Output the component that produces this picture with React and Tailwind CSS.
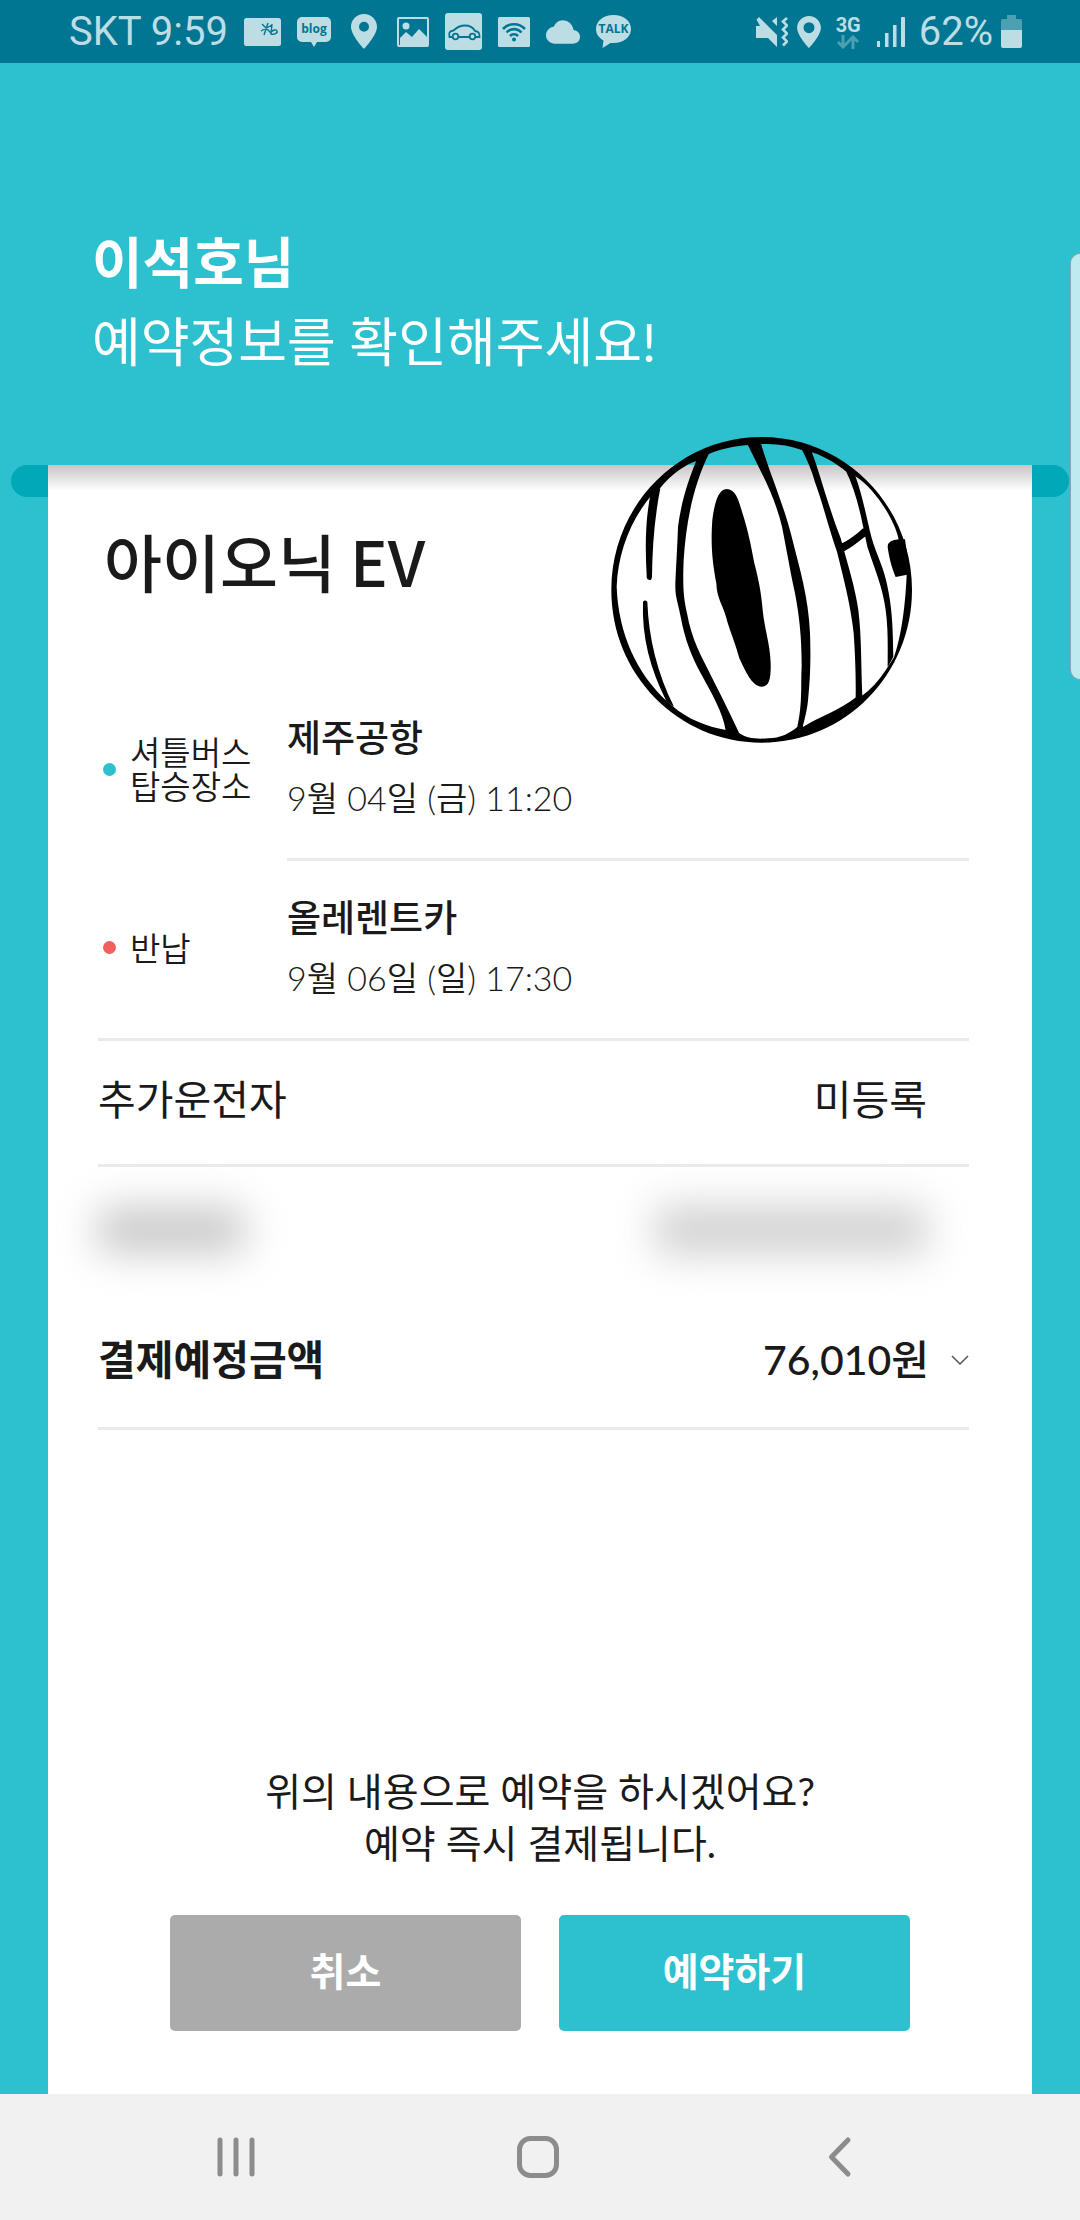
import { IoCloudSharp } from 'react-icons/io5';

const INK = '#bddde5';
const SEA = '#007693';

function PinIcon({ className, hole = 5 }) {
  return (
    <svg viewBox="0 0 26 35" className={className} fill="none">
      <path
        fillRule="evenodd"
        fill={INK}
        d={`M13 0C5.800 0 0 5.700 0 12.800 0 21.500 13 35 13 35s13-13.500 13-22.200C26 5.700 20.200 0 13 0zM13 ${12.8 - hole}a${hole} ${hole} 0 1 1 0 ${hole * 2}a${hole} ${hole} 0 1 1 0-${hole * 2}z`}
      />
    </svg>
  );
}

function CardIcon() {
  return (
    <svg viewBox="0 0 37 28" className="h-7 w-[37px]" fill="none">
      <rect width="37" height="28" rx="2.500" fill={INK} />
      <path d="M18 6l9 9M24 5l-4 12M17 13l11-6M28 6l-1 10c3 1 7-1 6-3-1-2-4-1-6 1" stroke={SEA} strokeWidth="1.400" />
    </svg>
  );
}

function BlogIcon() {
  return (
    <span className="relative flex h-[30px] w-[34px] justify-center">
      <svg viewBox="0 0 34 30" className="absolute inset-0 h-[30px] w-[34px]">
        <path fill={INK} d="M5 0h24a5 5 0 0 1 5 5v15a5 5 0 0 1-5 5h-9l-3 5-3-5H5a5 5 0 0 1-5-5V5a5 5 0 0 1 5-5z" />
      </svg>
      <span className="relative pt-1 font-['Open_Sans'] text-[12px] leading-4 font-bold text-[#007693]">blog</span>
    </span>
  );
}

function TalkIcon() {
  return (
    <span className="relative flex h-[33px] w-[35px] justify-center">
      <svg viewBox="0 0 35 33" className="absolute inset-0 h-[33px] w-[35px]">
        <path fill={INK} d="M17.500 0C7.500 0 0 6 0 14c0 5 3 9 7.500 11.500L6.500 33l8-5h3C27.500 28 35 22 35 14S27.500 0 17.500 0z" />
      </svg>
      <span className="relative pt-1.5 font-['Open_Sans'] text-[12px] leading-4 font-bold text-[#007693]">TALK</span>
    </span>
  );
}

function StatusBar() {
  return (
    <header className="flex h-[63px] items-center bg-[#007693] pr-[58px] pl-[69px] font-[Roboto] text-[40px] leading-none text-[#bddde5]">
      <span>SKT 9:59</span>
      <div className="ml-4 flex items-center gap-4">
        <CardIcon />
        <BlogIcon />
        <PinIcon className="ml-1 h-[35px] w-[26px]" />
        <svg viewBox="0 0 32 30" className="ml-1 h-[30px] w-8" fill="none">
          <rect x="1" y="1" width="30" height="28" stroke={INK} strokeWidth="2" rx="1" />
          <circle cx="9" cy="9" r="3.500" fill={INK} />
          <path fill={INK} d="M3 21l6-6 6 5 7-8 8 8v9H3z" />
        </svg>
        <svg viewBox="0 0 37 37" className="h-[37px] w-[37px]" fill="none" stroke={SEA} strokeWidth="1.800">
          <rect width="37" height="37" rx="3" fill={INK} stroke="none" />
          <path d="M7 24H4.500c-1-4 0-6 4-6.500C12 14 15 12.500 20 12.500s8 2 10 5.500c4 .500 4.500 2 4.500 6H31M14 24h10" />
          <circle cx="10.500" cy="23.500" r="2.800" />
          <circle cx="27.500" cy="23.500" r="2.800" />
        </svg>
        <svg viewBox="0 0 32 30" className="h-[30px] w-8" fill="none" stroke={SEA} strokeWidth="2.600">
          <rect width="32" height="30" rx="1.500" fill={INK} stroke="none" />
          <path d="M5 12a15 15 0 0 1 22 0M8.500 15.500a10 10 0 0 1 15 0M12 19a5.500 5.500 0 0 1 8 0" />
          <circle cx="16" cy="22.500" r="2" fill={SEA} stroke="none" />
        </svg>
        <IoCloudSharp className="h-[34px] w-[34px]" />
        <TalkIcon />
      </div>

      <div className="ml-auto flex items-center">
        <svg viewBox="0 0 32 32" className="h-8 w-8" fill={INK}>
          <path d="M0 10h4L0.500 3.500 3 1l18 18v12l-9-9H0zM21 1v9l-5-5z" />
          <path d="M31 2l-4 3.500 4 4-4 4 4 4-4 4 4 4-4 4" fill="none" stroke={INK} strokeWidth="2.600" />
        </svg>
        <PinIcon className="ml-2 h-8 w-[26px]" hole={6} />
        <div className="ml-3.5 flex flex-col items-center">
          <span className="text-[20px] leading-5 font-bold">3G</span>
          <svg viewBox="0 0 24 14" className="h-3.5 w-6" fill="none" stroke="#4d9fb4" strokeWidth="3">
            <path d="M7 0v12M2 7l5 5 5-5M17 14V2M12 7l5-5 5 5" />
          </svg>
        </div>
        <svg viewBox="0 0 28 30" className="ml-4 h-[30px] w-7" fill={INK}>
          <rect x="0" y="24" width="3" height="6" />
          <rect x="8" y="16" width="3.500" height="14" />
          <rect x="16" y="8" width="3.500" height="22" />
          <rect x="24" y="0" width="4" height="30" rx="1" />
        </svg>
        <span className="ml-3.5">62%</span>
        <svg viewBox="0 0 21 33" className="ml-2 h-[33px] w-[21px]">
          <path fill="#4d9fb4" d="M6 0h9v4h4a2 2 0 0 1 2 2v10H0V6a2 2 0 0 1 2-2h4z" />
          <path fill={INK} d="M0 15h21v16a2 2 0 0 1-2 2H2a2 2 0 0 1-2-2z" />
        </svg>
      </div>
    </header>
  );
}

// hand-drawn striped ball that hangs over the top edge of the ticket
function BallMark() {
  return (
    <svg viewBox="0 0 1020 1020" className="absolute -top-[45px] right-[102px] h-[340px] w-[340px]" fill="#000">
      <path
        fillRule="evenodd"
        d="M515 51C264 51 64 257 64 510s200 458 451 458 451-205 451-458S766 51 515 51z
          M80 500C84 400 120 300 188 222L210 205C240 165 290 130 322 122L355 103C380 90 430 78 475 75L515 72C560 70 600 76 635 90L665 97C710 110 750 140 765 152L795 168C850 200 915 300 925 355L950 465C945 580 930 660 912 712L893 742C865 785 840 810 818 826L798 832C750 870 690 890 640 920L625 918C600 940 570 955 535 955C500 958 470 955 448 940L408 930C350 920 290 895 250 860L232 845C140 760 85 640 80 500z"
      />
      <path d="M183 215l28-10c-18 90-24 180-25 265q-2 14-9 9-8 0-7-13c-5-90-4-170 13-251z" />
      <path d="M159 545q6-7 13 0c4 110 30 215 80 315l-22-15c-50-100-75-195-71-300z" />
      <path d="M320 120l38-22C308 200 288 310 281 420C278 500 280 530 291 580C305 660 335 710 362 765C395 830 420 880 450 945L407 932C400 880 365 820 335 765C305 710 285 660 272 590C262 540 255 530 256 490C258 440 262 380 264 320C275 240 295 180 320 120z" />
      <path d="M410 207C436 207 446 240 456 275C474 330 484 380 493 430C506 480 514 520 518 570C524 630 540 670 542 730C543 775 538 800 515 800C485 800 465 750 448 715C435 665 418 630 408 590C395 550 380 530 379 490C366 420 362 370 367 300C373 250 385 207 410 207z" />
      <path d="M472 72l40-5C535 150 580 250 605 350C630 450 655 530 660 640C663 720 660 780 655 830C652 870 645 890 638 922L622 920C638 850 632 790 635 740C635 650 628 590 615 520C600 450 590 390 576 320C555 230 510 150 472 72z" />
      <path d="M632 82l32 10C690 160 715 260 752 355C772 430 795 500 805 570C815 650 813 740 817 828L797 834C798 760 795 700 791 640C783 560 762 480 741 395C712 310 698 250 676 190C665 150 650 115 632 82z" />
      <path d="M765 148l30 17C815 220 825 270 839 330C852 390 877 430 888 480C905 550 909 610 910 710L893 742C893 680 895 630 887 570C878 500 855 450 832 380C815 300 802 220 765 148z" />
      <path d="M745 374c30-10 55-32 75-50l12 22c-25 15-45 38-75 50z" />
      <path d="M893 380q0-20 34-22l18 0 14 105-42 8c-13-30-21-65-24-91z" />
    </svg>
  );
}

const TRIPS = [
  { label: '셔틀버스 탑승장소', place: '제주공항', when: '9월 04일 (금) 11:20', dot: 'bg-[#2dc1cf]' },
  { label: '반납', place: '올레렌트카', when: '9월 06일 (일) 17:30', dot: 'bg-[#f15f5f]' },
];

function Trips() {
  return (
    <dl className="border-b-[3px] border-[#eaeaea]">
      {TRIPS.map((trip, i) => (
        <div key={trip.place} className={`flex ${i === 0 ? 'h-[180px]' : 'h-[177px]'}`}>
          <dt className="flex w-[189px] items-center pb-1 pl-[5px] text-[33px] leading-[34px] font-[350]">
            <span className={`mr-3.5 h-[13px] w-[13px] shrink-0 rounded-full ${trip.dot}`} />
            <span>{trip.label}</span>
          </dt>
          <dd className={`flex flex-1 flex-col justify-center pb-1 ${i === 0 ? 'border-b-[3px] border-[#eaeaea]' : ''}`}>
            <span className="text-[37px] leading-[60px] font-medium">{trip.place}</span>
            <span className="text-[34px] leading-[60px] font-[350]">{trip.when}</span>
          </dd>
        </div>
      ))}
    </dl>
  );
}

function NavBar() {
  return (
    <nav className="flex h-[126px] items-center justify-center gap-[238px] bg-[#f1f1f1] pr-1 text-[#8c8c8c]">
      <button type="button" aria-label="최근 앱" className="flex w-16 justify-center">
        <svg viewBox="0 0 40 42" className="h-[42px] w-10" fill="none" stroke="currentColor" strokeWidth="5" strokeLinecap="round">
          <path d="M4 4v34M20 4v34M36 4v34" />
        </svg>
      </button>
      <button type="button" aria-label="홈" className="flex w-16 justify-center">
        <svg viewBox="0 0 42 42" className="h-[42px] w-[42px]" fill="none" stroke="currentColor" strokeWidth="5">
          <rect x="2.500" y="2.500" width="37" height="37" rx="11" />
        </svg>
      </button>
      <button type="button" aria-label="뒤로" className="flex w-16 justify-center">
        <svg viewBox="0 0 24 42" className="h-[42px] w-6" fill="none" stroke="currentColor" strokeWidth="5" strokeLinecap="round" strokeLinejoin="round">
          <path d="M20 4L3.500 21 20 38" />
        </svg>
      </button>
    </nav>
  );
}

export default function App() {
  return (
    <div className="relative flex min-h-screen flex-col bg-[#2dc1cf] font-[Lato,'Noto_Sans_CJK_KR',sans-serif] text-[#1a1a1a]">
      <StatusBar />

      <div className="h-[402px] px-[92px] pt-[159px] text-white">
        <h1 className="text-[55px] leading-[80px] font-bold">이석호님</h1>
        <p className="text-[53px] leading-[80px]">예약정보를 확인해주세요!</p>
      </div>

      <div className="mx-[11px] h-8 rounded-full bg-[#00a9b8]" />

      <main className="relative mx-12 -mt-8 flex flex-1 flex-col bg-white bg-[linear-gradient(#c6c6c6,#ffffff_26px)] pr-[63px] pl-[50px]">
        <BallMark />
        <h2 className="pt-[50px] pl-1.5 font-['Noto_Sans_CJK_KR',sans-serif] text-[63px] leading-[90px] font-medium">
          아이오닉 EV
        </h2>

        <div className="mt-[76px]">
          <Trips />
        </div>

        <div className="flex h-[126px] items-center justify-between border-b-[3px] border-[#eaeaea] pr-[42px] pb-1.5 text-[41px]">
          <span>추가운전자</span>
          <span>미등록</span>
        </div>

        {/* masked personal details */}
        <div className="flex h-[126px] items-center justify-between pr-[42px]" aria-hidden="true">
          <div className="h-11 w-[146px] bg-[#c6c6c6] blur-[20px]" />
          <div className="h-12 w-[272px] bg-[#d0d0d0] blur-[20px]" />
        </div>

        <button type="button" className="flex h-[137px] items-center border-b-[3px] border-[#eaeaea] text-left text-[41px] font-bold">
          <span>결제예정금액</span>
          <span className="ml-auto font-medium">76,010원</span>
          <svg viewBox="0 0 18 10" className="ml-[22px] h-2.5 w-[18px]" fill="none" stroke="#555" strokeWidth="1.500">
            <path d="M1 1l8 8 8-8" />
          </svg>
        </button>

        <div className="mt-auto pb-[63px]">
          <p className="-mr-[13px] text-center text-[39px] leading-[52px]">
            위의 내용으로 예약을 하시겠어요?
            <br />
            예약 즉시 결제됩니다.
          </p>
          <div className="mt-[46px] mr-[59px] ml-[72px] flex gap-[38px] text-[39px] font-bold text-white">
            <button type="button" className="h-[116px] flex-1 rounded-[5px] bg-[#ababab] pb-1">취소</button>
            <button type="button" className="h-[116px] flex-1 rounded-[5px] bg-[#2dc1cf] pb-1">예약하기</button>
          </div>
        </div>
      </main>

      <NavBar />

      {/* edge panel handle */}
      <div className="absolute top-[253px] right-0 h-[427px] w-2.5 rounded-l-[14px] border border-r-0 border-[#7fa9ad] bg-[#bfebf0]" />
    </div>
  );
}
